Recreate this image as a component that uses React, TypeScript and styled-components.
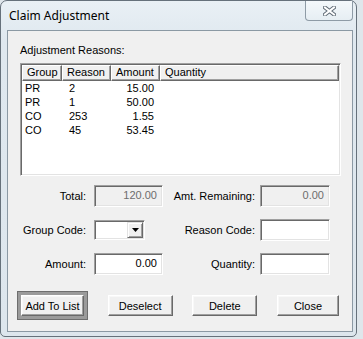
import styled, { createGlobalStyle } from 'styled-components';

const GlobalStyle = createGlobalStyle`
  html, body {
    margin: 0;
    padding: 0;
    background: #dfe6eb;
  }
  #root {
    width: 363px;
    height: 339px;
    overflow: hidden;
  }
  * {
    box-sizing: border-box;
  }
`;

const Window = styled.div`
  width: 357px;
  height: 337px;
  border: 1px solid #66717b;
  border-radius: 7px 7px 5px 5px;
  background: linear-gradient(#e9f0f5, #dfe8ef 40px, #dde6ed);
  display: flex;
  flex-direction: column;
  font-family: 'Liberation Sans', Arial, sans-serif;
  font-size: 11px;
  color: #000;
`;

const TitleBar = styled.div`
  height: 29px;
  display: flex;
  justify-content: space-between;
  align-items: flex-start;
  padding-left: 8px;
`;

const Title = styled.div`
  font-family: 'Noto Sans', 'Liberation Sans', sans-serif;
  font-size: 12px;
  line-height: 29px;
`;

const CloseButton = styled.div`
  width: 48px;
  height: 20px;
  margin-right: 3px;
  border: 1px solid #8e9ba6;
  border-top: none;
  border-radius: 0 0 4px 4px;
  background: linear-gradient(#f4f8fb, #e6eef3);
  display: flex;
  align-items: center;
  justify-content: center;
`;

const Client = styled.div`
  flex: 1;
  margin: 0 3px 4px 6px;
  border: 1px solid #8b99a4;
  background: #f0f0f0;
  display: flex;
  flex-direction: column;
  padding-top: 12px;
`;

const SectionLabel = styled.div`
  margin-left: 12px;
  line-height: 14px;
  height: 14px;
`;

const ListView = styled.div`
  margin: 6px 0 0 12px;
  width: 321px;
  height: 113px;
  background: #fff;
  border: 1px solid;
  border-color: #a0a0a0 #fff #fff #a0a0a0;
  box-shadow: inset 1px 1px #696969, inset -1px -1px #e3e3e3;
  padding: 1px;
`;

const COLS = '40px 49px 49px 179px';

const HeaderRow = styled.div`
  display: grid;
  grid-template-columns: ${COLS};
  height: 16px;
`;

const HeaderCell = styled.div`
  background: #f0f0f0;
  border: 1px solid;
  border-color: #fff #696969 #696969 #fff;
  box-shadow: inset -1px -1px #a0a0a0;
  padding-left: 4px;
  line-height: 13px;
  white-space: nowrap;
  overflow: hidden;
`;

const DataRow = styled.div`
  display: grid;
  grid-template-columns: ${COLS};
  height: 14px;
  line-height: 14px;
`;

const DataCell = styled.div<{ $right?: boolean; $indent?: number }>`
  text-align: ${({ $right }) => ($right ? 'right' : 'left')};
  padding-left: ${({ $indent }) => $indent ?? 0}px;
  padding-right: ${({ $right }) => ($right ? 6 : 0)}px;
  white-space: nowrap;
`;

const FormGrid = styled.div`
  margin-top: 9px;
  display: grid;
  grid-template-columns: 86px 69px 97px 70px;
  grid-auto-rows: 22px;
  row-gap: 12px;
  align-items: center;
`;

const FieldLabel = styled.div<{ $pad: number }>`
  text-align: right;
  padding-right: ${({ $pad }) => $pad}px;
`;

const TextBox = styled.div<{ $disabled?: boolean; $w: number }>`
  width: ${({ $w }) => $w}px;
  height: 22px;
  border: 1px solid;
  border-color: #a0a0a0 #fff #fff #a0a0a0;
  box-shadow: inset 1px 1px #696969, inset -1px -1px #e3e3e3;
  background: ${({ $disabled }) => ($disabled ? '#f0f0f0' : '#fff')};
  color: ${({ $disabled }) => ($disabled ? '#6d6d6d' : '#000')};
  text-align: right;
  padding-right: 5px;
  line-height: 19px;
`;

const Combo = styled.div`
  width: 51px;
  height: 20px;
  border: 1px solid;
  border-color: #a0a0a0 #fff #fff #a0a0a0;
  box-shadow: inset 1px 1px #696969, inset -1px -1px #e3e3e3;
  background: #fff;
  display: flex;
  justify-content: flex-end;
  padding: 1px;
`;

const ComboArrow = styled.div`
  width: 16px;
  height: 16px;
  background: #f0f0f0;
  border: 1px solid;
  border-color: #e3e3e3 #696969 #696969 #e3e3e3;
  box-shadow: inset 1px 1px #fff, inset -1px -1px #a0a0a0;
  display: flex;
  align-items: center;
  justify-content: center;
`;

const ButtonRow = styled.div`
  margin-top: 16px;
  display: flex;
  align-items: center;
  justify-content: space-between;
  padding: 0 13px 0 9px;
`;

const DefaultFrame = styled.div`
  padding: 3px;
  background: #9b9b9b;
  border: 1px solid #6e6e6e;
`;

const Button = styled.div<{ $w?: number }>`
  width: ${({ $w }) => $w ?? 65}px;
  height: 21px;
  background: #f0f0f0;
  border: 1px solid;
  border-color: #fff #696969 #696969 #fff;
  box-shadow: inset -1px -1px #a0a0a0, inset 1px 1px #f8f8f8;
  display: flex;
  align-items: center;
  justify-content: center;
  font-size: 11px;
`;

const rows = [
  ['PR', '2', '15.00', ''],
  ['PR', '1', '50.00', ''],
  ['CO', '253', '1.55', ''],
  ['CO', '45', '53.45', ''],
];

export default function App() {
  return (
    <>
      <GlobalStyle />
      <Window>
        <TitleBar>
          <Title>Claim Adjustment</Title>
          <CloseButton>
            <svg width="13" height="10" viewBox="0 0 13 10">
              <path d="M2 1.5 L11 8.5 M11 1.5 L2 8.5" stroke="#5f6a75" strokeWidth="4" strokeLinecap="square" />
              <path d="M2 1.5 L11 8.5 M11 1.5 L2 8.5" stroke="#fff" strokeWidth="2" strokeLinecap="square" />
            </svg>
          </CloseButton>
        </TitleBar>
        <Client>
          <SectionLabel>Adjustment Reasons:</SectionLabel>
          <ListView>
            <HeaderRow>
              <HeaderCell>Group</HeaderCell>
              <HeaderCell>Reason</HeaderCell>
              <HeaderCell>Amount</HeaderCell>
              <HeaderCell>Quantity</HeaderCell>
            </HeaderRow>
            {rows.map((r, i) => (
              <DataRow key={i}>
                <DataCell $indent={3}>{r[0]}</DataCell>
                <DataCell $indent={7}>{r[1]}</DataCell>
                <DataCell $right>{r[2]}</DataCell>
                <DataCell $indent={6}>{r[3]}</DataCell>
              </DataRow>
            ))}
          </ListView>
          <FormGrid>
            <FieldLabel $pad={8}>Total:</FieldLabel>
            <TextBox $w={69} $disabled>120.00</TextBox>
            <FieldLabel $pad={5}>Amt. Remaining:</FieldLabel>
            <TextBox $w={70} $disabled>0.00</TextBox>

            <FieldLabel $pad={8}>Group Code:</FieldLabel>
            <Combo>
              <ComboArrow>
                <svg width="7" height="4" viewBox="0 0 7 4">
                  <path d="M0 0 H7 L3.5 4 Z" fill="#000" />
                </svg>
              </ComboArrow>
            </Combo>
            <FieldLabel $pad={5}>Reason Code:</FieldLabel>
            <TextBox $w={70} />

            <FieldLabel $pad={8}>Amount:</FieldLabel>
            <TextBox $w={69}>0.00</TextBox>
            <FieldLabel $pad={5}>Quantity:</FieldLabel>
            <TextBox $w={70} />
          </FormGrid>
          <ButtonRow>
            <DefaultFrame>
              <Button $w={63}>Add To List</Button>
            </DefaultFrame>
            <Button>Deselect</Button>
            <Button>Delete</Button>
            <Button $w={62}>Close</Button>
          </ButtonRow>
        </Client>
      </Window>
    </>
  );
}
